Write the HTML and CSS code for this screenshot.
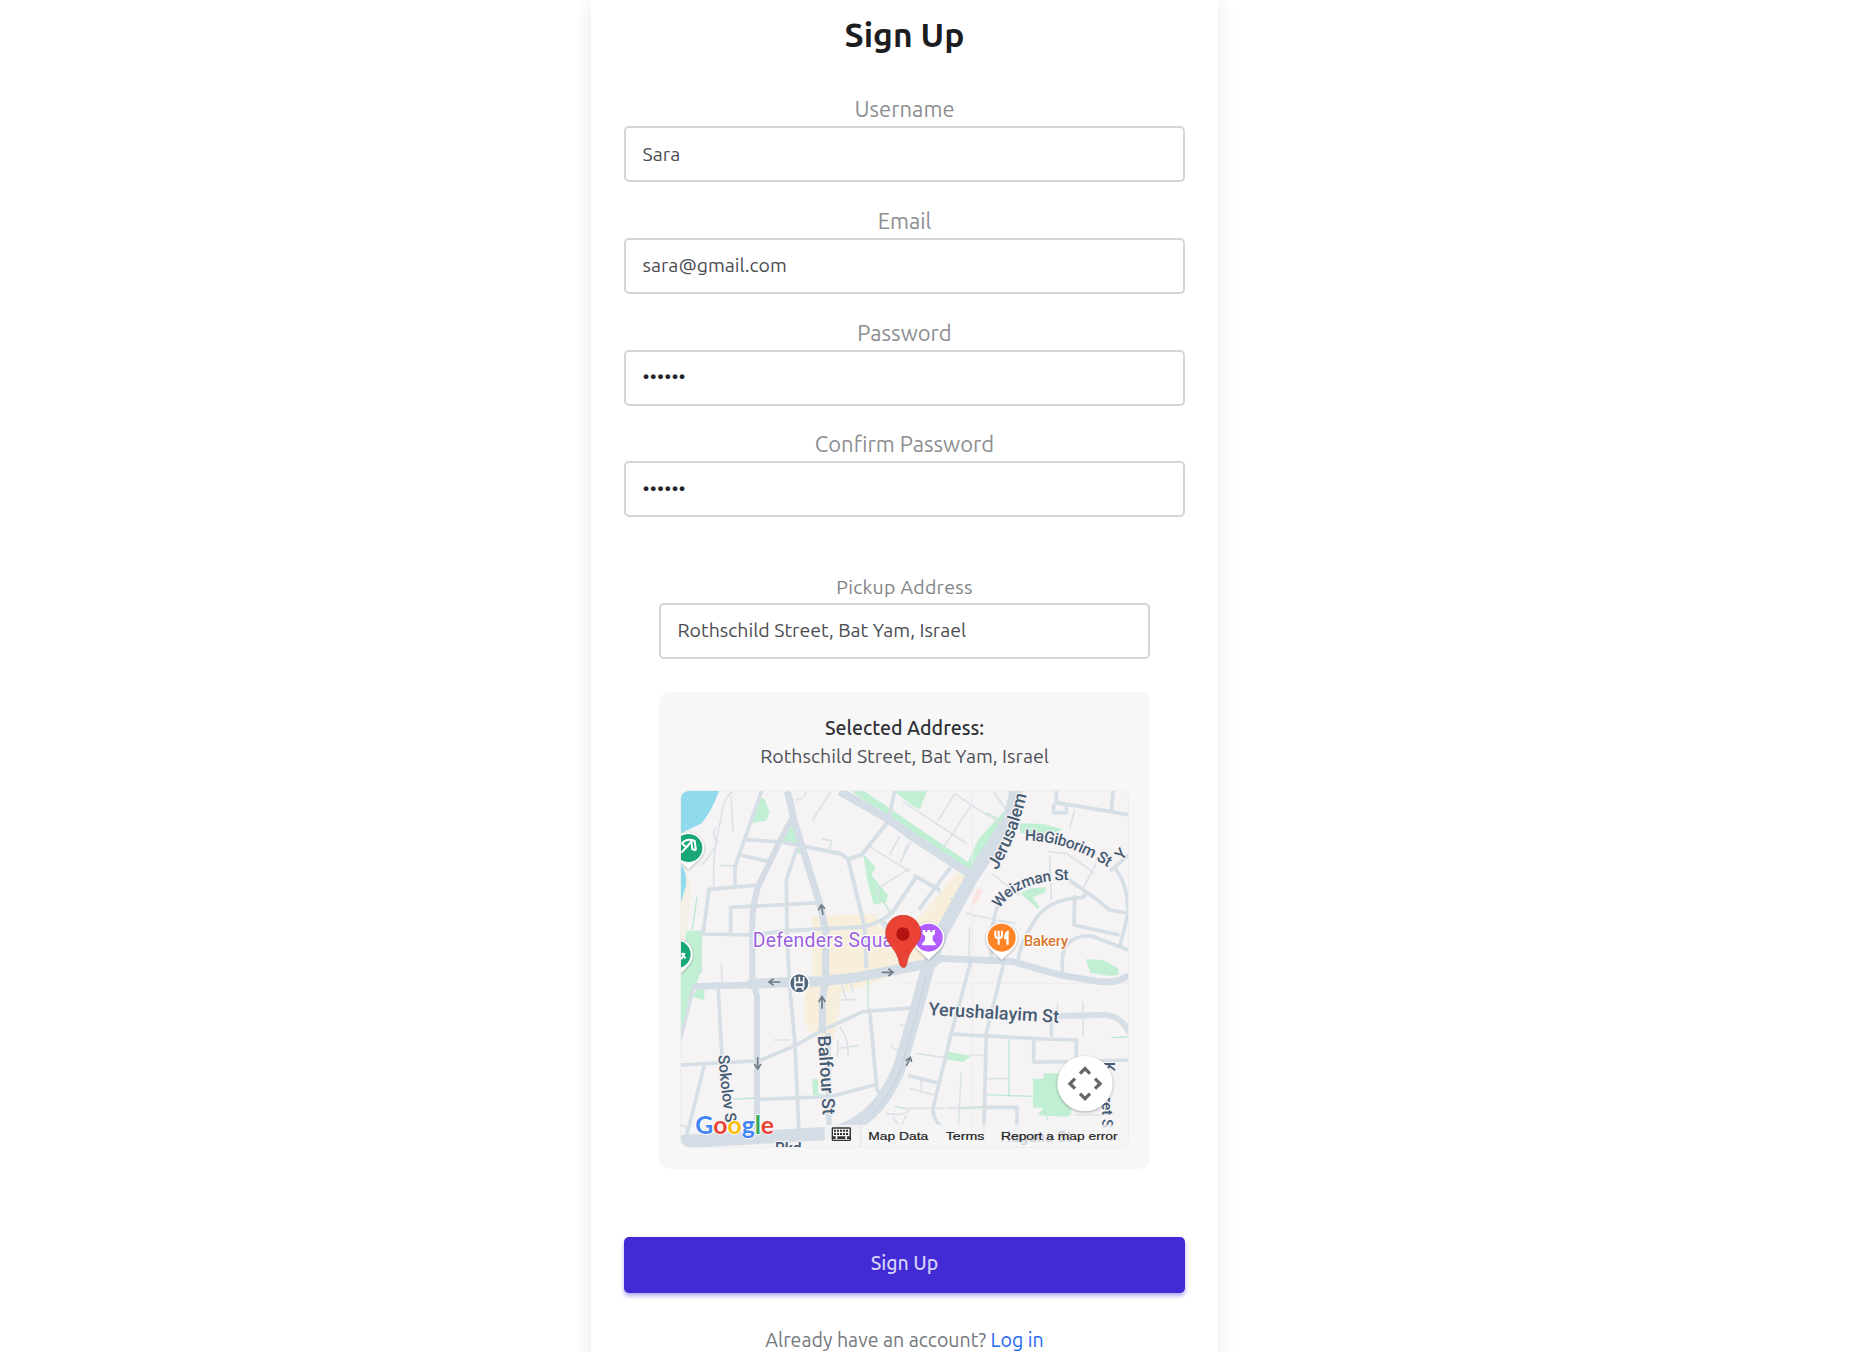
FILE: index.html
```html
<!DOCTYPE html>
<html lang="en">
<head>
<meta charset="utf-8">
<title>Sign Up</title>
<link rel="stylesheet" href="styles.css">
</head>
<body>
<main class="page">
<form class="panel">
  <h1 class="title">Sign Up</h1>
  <div class="field"><label class="label" for="user">Username</label><input class="input" id="user" type="text" value="Sara"></div>
  <div class="field"><label class="label" for="mail">Email</label><input class="input" id="mail" type="text" value="sara@gmail.com"></div>
  <div class="field"><label class="label" for="pass">Password</label><input class="input secret" id="pass" type="password" value="secret"></div>
  <div class="field"><label class="label" for="confirm">Confirm Password</label><input class="input secret" id="confirm" type="password" value="secret"></div>
  <section class="pickup">
    <label class="label small" for="addr">Pickup Address</label>
    <input class="input" id="addr" type="text" value="Rothschild Street, Bat Yam, Israel">
    <div class="selected">
      <strong class="selected-title">Selected Address:</strong>
      <span class="selected-text">Rothschild Street, Bat Yam, Israel</span>
      <svg class="map" viewBox="34 33 1341 1068" role="img" aria-label="Map">
        <rect x="33" y="33" width="1344" height="1068" fill="#f5f3f3"/>
        <!-- water, commercial areas and parks -->
        <path d="M33 33H148Q128 90 96 130L33 160ZM33 255Q52 275 50 315L33 370Z" fill="#90daee"/>
        <path d="M50 270Q72 330 55 420L50 490L33 560V370L50 315Z" fill="#f5f0e5"/>
        <g fill="#f7efdc">
          <path d="M425 408L620 402L625 440L690 455L760 400L860 280L895 290L900 325L800 480L790 545L560 625L512 640L510 690L490 780L420 755L403 725L405 650L430 590Z"/>
        </g>
        <path d="M924 325L940 330L920 370L902 378Z" fill="#fbe4e1"/>
        <g fill="#c1efd3">
          <path d="M270 52L285 58L300 98L290 122L240 130Z"/>
          <path d="M370 130L390 190L335 190ZM382 202L400 206L392 224L382 216Z"/>
          <path d="M545 34H585L895 246L925 180L960 140L1005 92L1010 120L960 220L908 285L720 160Z"/>
          <path d="M675 34H772L750 88L725 75Z"/>
          <path d="M580 222L618 260L605 285L655 345L650 365L612 374L595 310Z"/>
          <path d="M50 452H98L95 570L70 640L33 780V600Z"/><path d="M85 622L105 630L103 660L68 650Z"/>
          <path d="M428 898H445V940L465 945H430Z"/>
          <path d="M830 815L905 828L880 846L828 838Z"/>
          <path d="M1090 896H1122V880H1205V1000L1195 1010L1105 1006L1120 983H1090Z"/>
          <path d="M1052 340L1085 325L1128 322V336L1090 352L1110 380L1105 388Z"/>
          <path d="M1050 130L1120 132L1180 148L1150 160L1052 160Z"/>
          <path d="M1248 538L1300 540L1345 565L1347 585L1320 588L1262 578Z"/>
        </g>
        <!-- lanes -->
        <g fill="none" stroke="#dbe2e8" stroke-width="5">
          <path d="M188 36Q160 55 155 110L140 180Q130 230 132 320M184 50L190 155M140 142Q125 155 138 180M145 180Q130 220 95 255"/>
          <path d="M410 34Q404 58 376 60M482 36L428 122M455 176L486 182L480 208M150 257H196M312 780H360M155 552L158 610M628 425L655 455"/>
          <path d="M600 200L720 275M690 168L660 225M715 190L700 225M720 265L625 325L628 350M855 40L905 75L820 205M805 122L855 42M700 65L890 190M905 75L1000 135M970 34L1010 90"/>
          <path d="M725 185L690 250M730 285L815 340M840 355L860 366M895 400L920 410M900 440L898 540M1215 90L1200 145M965 280L1050 345M1135 215L1190 220L1275 280M1280 250L1240 325M1140 225L1145 360M890 400L980 420L1040 430"/>
          <path d="M510 740Q540 780 535 830M505 780L503 830M505 805L565 797M505 660L560 658M515 610L530 660M540 600L550 635M665 790Q670 812 685 808M33 1035L50 1040V1070"/>
          <path d="M740 820L840 835M740 745L690 735M875 878L866 1035M830 985L940 980M900 825H940M944 897L1015 895M700 985H825M710 1005L690 1050M755 900V930M720 925L792 945M1240 665V770M1164 670V700M1215 1005H1320M650 1000Q700 1010 720 990M670 1010L700 1060"/>
          <path d="M908 34V1090M690 610H1377" stroke="#eeecee" stroke-width="3"/>
        </g>
        <g fill="none" stroke="#bce8d2" stroke-width="4">
          <path d="M82 350L68 450M94 500V580M595 600V690M190 958L255 954M1018 775V950M940 944L1088 949M870 986L940 982M1325 773L1377 771M950 98L990 120M630 318L632 350L660 395M675 980L705 985M1122 988L1135 1020"/>
        </g>
        <!-- streets -->
        <g fill="none" stroke="#d6dfe6" stroke-width="11" stroke-linejoin="round" stroke-linecap="round">
          <path d="M275 36L215 205L196 260V315M225 178L330 186M212 225L292 244M380 210L350 300L352 460L360 620L375 780L388 1060"/>
          <path d="M100 462L118 328L265 315M183 460V382L455 368M98 462L245 465"/>
          <path d="M245 465L350 452L585 440Q640 425 670 395L740 290" stroke-width="12"/>
          <path d="M345 188L400 198L515 222L535 237L575 225L655 125M535 237L585 440L590 560" stroke-width="12"/>
          <path d="M655 125L675 34M840 265L750 385M740 290L808 328M640 425L690 470"/>
          <path d="M72 620L33 775M80 615L145 612L158 850M33 855L270 842L370 800L470 745L580 695L720 684M103 860L48 1080M270 958L480 950L615 915M600 690L622 930L640 950"/>
          <path d="M902 550L845 760L790 985Q790 1020 815 1040M1002 550L950 760L942 1060M842 762L1125 777L1220 780V845L1377 840M1092 780V846L1190 845M945 982H1042V1060M720 887L808 910"/>
          <path d="M965 540V480Q970 400 990 370M1045 545Q1050 490 1090 430Q1130 355 1240 352L1250 340"/>
          <path d="M1170 280L1270 350L1320 390L1377 400M1215 350L1213 435L1345 464M1335 265Q1375 310 1375 400L1350 500M1178 590V540Q1180 465 1265 468L1377 510"/>
          <path d="M1160 34V68L1325 95L1377 105M1325 95L1330 34M1152 75V98H1190V75M1325 270L1377 225M1145 766V710"/>
          <path d="M1170 708L1290 705Q1350 700 1377 755" stroke-width="18"/>
        </g>
        <!-- main roads -->
        <g fill="none" stroke="#d4dde5" stroke-linejoin="round">
          <path d="M352 34Q365 70 370 110L400 210L450 370L468 450V600L458 660V760" stroke-width="21"/>
          <path d="M370 110L330 185L265 320Q248 380 248 430V590L262 650V1065" stroke-width="18"/>
          <path d="M510 34L660 120L720 165L905 285" stroke-width="25"/>
          <path d="M70 620L240 615" stroke-width="20"/>
          <path d="M235 613L310 608L460 604L560 592L780 550" stroke-width="30"/>
          <path d="M780 560L815 535L1030 545L1170 585L1290 605Q1350 610 1377 585" stroke-width="20"/>
          <path d="M1042 20L1020 120L905 295L820 450L775 560L740 690L705 810Q680 910 620 980Q560 1045 480 1060L33 1085" stroke-width="40"/>
          <path d="M475 760L478 1060" stroke-width="16"/>
          <path d="M770 590L735 720L700 850Q670 935 610 1000" stroke="#c0cad4" stroke-width="2"/>
        </g>
        <!-- direction arrows -->
        <g fill="none" stroke="#727c88" stroke-width="5">
          <path d="M460 405L455 375M446 390L455 375L466 386M332 606H300M312 596L298 606L312 616M636 577H668M656 566L670 577L656 588M457 686V652M447 666L457 650L467 666M264 832V866M254 852L264 867L274 852M710 858L722 832M708 842L722 832L726 846"/>
        </g>
        <!-- street names -->
        <defs>
          <path id="p-jer" d="M982 272Q1030 190 1052 115T1076 10"/>
          <path id="p-hag" d="M1065 182Q1200 182 1330 272"/>
          <path id="p-wei" d="M990 386Q1045 300 1200 300"/>
          <path id="p-yer" d="M776 705L1190 730"/>
          <path id="p-bal" d="M444 768Q453 880 460 1020"/>
          <path id="p-sok" d="M146 826Q153 930 172 1050"/>
        </defs>
        <g class="street">
          <text font-size="53"><textPath href="#p-jer" textLength="246">Jerusalem</textPath></text>
          <text font-size="47"><textPath href="#p-hag" textLength="266">HaGiborim St</textPath></text>
          <text font-size="46"><textPath href="#p-wei" textLength="234">Weizman St</textPath></text>
          <text font-size="54"><textPath href="#p-yer" textLength="392">Yerushalayim St</textPath></text>
          <text font-size="54"><textPath href="#p-bal" textLength="238">Balfour St</textPath></text>
          <text font-size="47"><textPath href="#p-sok" textLength="204">Sokolov S</textPath></text>
          <text x="316" y="1122" font-size="47">Rkd</text>
          <text x="992" y="1087" font-size="46">Hagana St</text>
          <text transform="translate(1302 846) rotate(90)" font-size="45">K</text>
          <text transform="translate(1298 951) rotate(90)" font-size="45">ret S</text>
          <text transform="translate(1356 243) rotate(-48)" font-size="46">Y</text>
        </g>
        <!-- places -->
        <text class="place purple" x="249" y="501" font-size="58" textLength="442">Defenders Squar</text>
        <text class="place orange" x="1062" y="497" font-size="46" textLength="134">Bakery</text>
        <g class="pin" fill="#fff">
          <path d="M777 427a47 47 0 0 1 34 80L777 540L743 507a47 47 0 0 1 34-80Z"/>
          <path d="M996 427a47 47 0 0 1 34 80L996 540L962 507a47 47 0 0 1 34-80Z"/>
          <path d="M56 157a47 47 0 0 1 34 80L56 268L22 237a47 47 0 0 1 34-80Z"/>
          <path d="M22 477a47 47 0 0 1 34 80L22 592Z"/>
        </g>
        <circle cx="777" cy="473" r="42" fill="#b15cff"/><circle cx="996" cy="473" r="42" fill="#ff8425"/>
        <circle cx="56" cy="204" r="42" fill="#19a775"/><circle cx="22" cy="523" r="41" fill="#19a775"/>
        <path d="M759 450H767V456H773V450H782V456H788V450H796V463L789 468V481L798 491V496H757V491L766 481V468L759 463Z" fill="#fff"/>
        <path d="M977 452V466Q977 474 984 474H990Q997 474 997 466V452M987 452V494" fill="none" stroke="#fff" stroke-width="6"/>
        <path d="M1017 451V494H1010V478H1003Q1002 455 1017 451Z" fill="#fff"/>
        <path d="M36 190Q53 173 75 183L79 211M36 190L50 202L65 184L68 208L79 211M57 195L35 218M36 519L47 535M34 538L45 519" fill="none" stroke="#fff" stroke-width="6"/>
        <circle cx="389" cy="610" r="29" fill="#50667b" stroke="#fff" stroke-width="4"/>
        <path d="M376 591V621H402V591M378 607H400M389 590V605M382 622L376 630M396 622L402 630" fill="none" stroke="#fff" stroke-width="5"/>
        <path d="M700 406C670 406 648 430 648 460C648 493 683 504 690 553Q695 563 702 563Q708 563 711 553C718 504 753 493 753 460C753 430 731 406 700 406Z" fill="#ea4335" stroke="#c9362c" stroke-width="2"/>
        <circle cx="700" cy="462" r="20" fill="#b31412"/>
        <!-- attribution bar -->
        <path d="M465 1034H1377V1101H465Z" fill="#f5f5f5" fill-opacity=".78"/>
        <path d="M573 1034V1101" stroke="#e2e5e9" stroke-width="3"/>
        <rect x="488" y="1044" width="54" height="37" rx="2" fill="#f5f5f5" stroke="#333" stroke-width="4"/>
        <path d="M493 1052H539M493 1062H539" stroke="#333" stroke-width="6" stroke-dasharray="6 3"/><path d="M488 1073H498M503 1073H527M532 1073H542" stroke="#333" stroke-width="8"/>
        <g class="legal" font-size="34">
          <text x="596" y="1081" textLength="180" lengthAdjust="spacingAndGlyphs">Map Data</text><text x="828" y="1081" textLength="116" lengthAdjust="spacingAndGlyphs">Terms</text><text x="994" y="1081" textLength="350" lengthAdjust="spacingAndGlyphs">Report a map error</text>
        </g>
        <text class="brand" x="77" y="1063" font-size="75" textLength="236" lengthAdjust="spacingAndGlyphs"><tspan fill="#4285f4">G</tspan><tspan fill="#ea4335">o</tspan><tspan fill="#fbbc04">o</tspan><tspan fill="#4285f4">g</tspan><tspan fill="#34a853">l</tspan><tspan fill="#ea4335">e</tspan></text>
        <circle class="pan" cx="1246" cy="911" r="83" fill="#fff"/>
        <path d="M1231 881L1246 866L1261 881M1231 941L1246 956L1261 941M1216 896L1201 911L1216 926M1276 896L1291 911L1276 926" fill="none" stroke="#666" stroke-width="10"/>
      </svg>
    </div>
  </section>
  <button class="submit" type="button">Sign Up</button>
  <p class="login">Already have an account? <a class="link" href="#">Log in</a></p>
</form>
</main>
</body>
</html>
```
FILE: styles.css
```css
* { box-sizing: border-box; }
body { margin: 0; background: #fff; font-family: Ubuntu, "Noto Sans", sans-serif; }
.page { display: flex; justify-content: center; height: 1352px; padding-right: 43px; overflow: hidden; }
.panel { width: 627px; height: 1400px; padding: 0 33px; background: #fff; box-shadow: 0 0 18px rgba(0,0,0,.09); text-align: center; }
.title { margin: 0; height: 94px; line-height: 70px; font-size: 33.7px; font-weight: 600; color: #1b1d21; }
.field { display: flex; flex-direction: column; margin-bottom: 23.8px; }
.label { display: block; height: 32px; line-height: 29px; font-size: 22px; color: #8d8e92; }
.label.small { line-height: 33px; font-size: 19.5px; letter-spacing: .25px; color: #828387; }
.input { display: block; width: 100%; height: 56px; padding: 0 16.5px 1px; border: 2px solid #d5d5d6; border-radius: 5px; background: #fff; color: #4b4c51; font: 19.5px Ubuntu, "Noto Sans", sans-serif; outline: 0; }
.secret { padding-bottom: 3px; color: #24252b; letter-spacing: .2px; }
.pickup { padding: 29.8px 35px 0; }
.selected { display: flex; flex-direction: column; margin-top: 33px; padding: 22px; height: 477px; border-radius: 10px; background: #f7f7f7; font-size: 19.5px; line-height: 28px; }
.selected-title { font-weight: 500; color: #303137; }
.selected-text { color: #4f5055; }
.map { display: block; width: 447px; height: 356px; margin-top: 21px; border-radius: 8px; box-shadow: 0 0 2px rgba(0,0,0,.14); }
.street { font-family: Roboto, sans-serif; font-weight: 500; fill: #465b74; stroke: #f5f3f3; stroke-width: 7px; paint-order: stroke; }
.place { font-family: Roboto, sans-serif; font-weight: 500; stroke: #fff; stroke-width: 7px; paint-order: stroke; }
.purple { font-weight: 400; fill: #9b5fe0; }
.orange { fill: #d9772f; }
.legal { font-family: "Liberation Sans", sans-serif; fill: #222; stroke: #222; stroke-width: .6px; }
.brand { font-family: Lato, sans-serif; font-weight: 700; stroke: #fff; stroke-width: 5px; paint-order: stroke; }
.pin { filter: drop-shadow(0 2px 3px rgba(0,0,0,.3)); }
.pan { filter: drop-shadow(0 3px 5px rgba(0,0,0,.3)); }
.submit { display: block; width: 100%; height: 56px; margin-top: 68px; padding: 0 0 4px; border: 0; border-radius: 5px; background: #422ad5; box-shadow: 0 3px 4px rgba(66,42,213,.4); color: #d4d2f8; font: 500 19.5px Ubuntu, "Noto Sans", sans-serif; }
.login { margin: 31px 0 0; line-height: 32px; font-size: 19.6px; color: #74777e; }
.link { color: #2668ef; text-decoration: none; }
```
